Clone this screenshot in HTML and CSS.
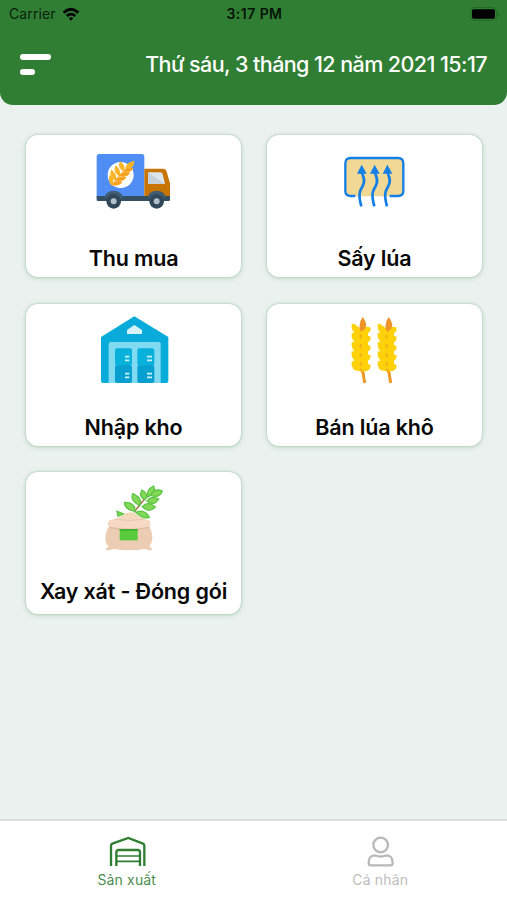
FILE: index.html
```html
<!DOCTYPE html>
<html lang="vi">
<head>
<meta charset="utf-8">
<title>Sản xuất</title>
<link rel="stylesheet" href="styles.css">
</head>
<body>
<div class="app">
  <header class="header">
    <div class="status">
      <div class="carrier"><span>Carrier</span>
        <svg class="wifi" viewBox="0 0 56 42"><path d="M2 13Q28-10 54 13L48 20Q28 2 8 20ZM12 24Q28 10 44 24L38 30Q28 22 18 30ZM21 34Q28 28 35 34L28 42Z"/></svg>
      </div>
      <span class="clock">3:17 PM</span>
      <svg class="battery" viewBox="0 0 90 42"><rect x="1.5" y="1.5" width="78" height="39" rx="12" fill="none" stroke="#256a28" stroke-width="3"/><rect x="6" y="7" width="69" height="28" rx="5"/><path d="M83 15q6 6 0 12z" fill="#1e571f"/></svg>
    </div>
    <div class="bar">
      <div class="menu"><i class="line long"></i><i class="line short"></i></div>
      <span class="date">Thứ sáu, 3 tháng 12 năm 2021 15:17</span>
    </div>
  </header>

  <main class="grid">
    <section class="card">
      <svg class="icon" viewBox="0 -18 300 255">
        <path d="M45 27H173Q181 27 181 35V160H38V35Q38 27 45 27Z" fill="#508df5"/>
        <path d="M181 71H237Q246 71 248 80L258 115V158H181Z" fill="#c77404"/>
        <path d="M192 82H229Q234 82 236 87L243 117H192Z" fill="#dce5ec"/><path d="M192 82L243 117H192Z" fill="#c6d1db"/>
        <path d="M38 153H258V164Q258 168 254 168H42Q38 168 38 164Z" fill="#344f62"/>
        <path d="M61 160a28 23 0 0 1 56 0zM190 160a28 23 0 0 1 56 0z" fill="#405c70"/>
        <g fill="#30485a"><circle cx="89" cy="169" r="22"/><circle cx="218" cy="169" r="22"/></g>
        <g fill="#b3c0c9"><circle cx="89" cy="169" r="9"/><circle cx="218" cy="169" r="9"/></g>
        <circle cx="110" cy="90" r="39" fill="#fff"/>
        <path d="M84 120Q108 85 147 54" fill="none" stroke="#f59a18" stroke-width="3"/>
        <g fill="#fbb529" stroke="#fbb529" stroke-width="4"><path d="M127 70Q126 55 149 50Q149 68 127 70Z"/><path d="M119 78Q102 66 109 52Q124 62 119 78Z"/><path d="M105 91Q88 79 96 64Q110 77 105 91Z"/><path d="M94 105Q75 94 83 77Q98 90 94 105Z"/><path d="M84 120Q74 107 78 94Q91 107 84 120Z"/></g>
        <g fill="#f79e1b" stroke="#f9a722" stroke-width="3"><path d="M119 78Q130 66 147 71Q138 84 119 78Z"/><path d="M105 91Q116 79 137 84Q126 99 105 91Z"/><path d="M94 105Q107 91 126 98Q114 112 94 105Z"/><path d="M84 119Q97 104 114 112Q103 124 84 119Z"/></g>
      </svg>
      <h2 class="label">Thu mua</h2>
    </section>
    <section class="card">
      <svg class="icon" viewBox="-15 -18 300 255">
        <rect x="46" y="39" width="174" height="115" rx="14" fill="#f1d894"/>
        <path d="M76 153H62Q46 153 46 138V55Q46 39 62 39H204Q220 39 220 55V138Q220 153 204 153H179" fill="none" stroke="#1480e6" stroke-width="7"/>
        <g fill="none" stroke="#1480e6" stroke-width="8"><path d="M95 80C99 95 108 106 98 123C89 138 84 147 94 184"/><path d="M134 80C138 95 147 106 137 123C128 138 123 147 133 184"/><path d="M172 80C176 95 185 106 175 123C166 138 161 147 171 184"/></g>
        <path d="M95 59L110 86H81ZM134 59L149 86H120ZM172 59L187 86H158Z" fill="#1480e6"/>
      </svg>
      <h2 class="label">Sấy lúa</h2>
    </section>
    <section class="card">
      <svg class="icon" viewBox="-18 0 300 255">
        <path d="M133 25L235 87V219Q235 225 229 225H39Q33 225 33 219V87Z" fill="#08abd9"/>
        <path d="M133 51L156 66V78H111V66Z" fill="#d8f3fc"/>
        <path d="M62 102H206Q212 102 212 108V225H56V108Q56 102 62 102Z" fill="#80daf2"/>
        <g fill="#08b0dc"><rect x="75" y="121" width="51" height="52" rx="6"/><rect x="142" y="121" width="51" height="52" rx="6"/></g>
        <g fill="#079fd0"><rect x="75" y="172" width="51" height="53" rx="6"/><rect x="142" y="172" width="51" height="53" rx="6"/></g>
        <path d="M105 146h13M105 157h13M171 146h15M171 157h15M105 197h13M105 208h13M171 197h15M171 208h15" stroke="#caf2f9" stroke-width="5"/>
      </svg>
      <h2 class="label">Nhập kho</h2>
    </section>
    <section class="card">
      <svg class="icon" viewBox="-28 0 300 255">
        <defs>
          <g id="grain"><path d="M80 77Q48 80 52 47Q62 46 67 53Q80 59 80 77Z"/><path d="M78 77Q110 82 109 59Q97 53 87 60Q78 66 78 77Z"/></g>
          <g id="ear">
            <path d="M80 60L85 187L91 225" fill="none" stroke="#ec9829" stroke-width="9"/>
            <g fill="#ffd109"><use href="#grain"/><use href="#grain" y="27"/><use href="#grain" y="55"/><use href="#grain" y="83"/><use href="#grain" y="112"/><rect x="59" y="60" width="42" height="126" rx="14"/></g>
            <path d="M85 27Q102 48 92 63L81 72Q74 65 76 50Q77 38 85 27Z" fill="#ed942b"/>
            <path d="M79 82v8M79 110v8M79 138v7M79 165v7M80 184l3 9" stroke="#f5ad1a" stroke-width="6" stroke-linecap="round"/>
          </g>
        </defs>
        <use href="#ear"/><use href="#ear" x="78"/>
      </svg>
      <h2 class="label">Bán lúa khô</h2>
    </section>
    <section class="card raised">
      <svg class="icon" viewBox="-18 -3 300 255">
        <path d="M133 106Q156 70 189 42" fill="none" stroke="#a66d3e" stroke-width="4"/>
        <g fill="#83d957" stroke="#5cc546" stroke-width="4">
          <path d="M174 60Q167 38 191 27Q200 48 174 60Z"/><path d="M182 55Q193 32 217 42Q208 65 182 55Z"/><path d="M165 69Q144 57 156 39Q179 52 165 69Z"/><path d="M171 73Q184 54 206 66Q192 89 171 73Z"/><path d="M149 86Q119 70 128 50Q158 62 149 86Z"/><path d="M157 89Q173 70 196 90Q176 110 157 89Z"/><path d="M135 103Q104 98 103 76Q136 76 135 103Z"/><path d="M138 106Q164 94 178 121Q157 128 138 106Z"/><path d="M84 117L81 103L101 111Z"/>
        </g>
        <path d="M59 148Q46 161 46 183Q46 201 57 209L49 213Q44 221 56 220L72 216Q119 224 164 216L178 220Q190 221 184 212L177 208Q187 199 187 181Q187 163 177 149Z" fill="#ecccb2"/>
        <path d="M75 127Q86 120 95 117Q106 107 120 106Q135 106 143 116L163 127Z" fill="#f3dbb9"/>
        <path d="M58 130Q87 121 118 121Q151 121 178 130Q185 142 178 152Q116 163 57 151Q49 141 58 130Z" fill="#f6d9c4"/>
        <path d="M58 151Q118 163 178 151" fill="none" stroke="#deb99e" stroke-width="4"/>
        <path d="M74 127Q117 134 162 127" fill="none" stroke="#e8c8ae" stroke-width="3"/>
        <path d="M99 116h2M112 113h2M125 112h2M137 118h2M117 121h2" stroke="#d9b98f" stroke-width="3"/>
        <path d="M89 156H143V190H89Z" fill="#59cc3e"/><path d="M89 156H143V161H89Z" fill="#3eb12e"/>
      </svg>
      <h2 class="label">Xay xát - Đóng gói</h2>
    </section>
  </main>

  <nav class="tabs">
    <div class="tab active">
      <svg class="tab-icon" viewBox="83 60 120 99"><g fill="none" stroke="#2e7d32" stroke-width="7"><path d="M95 153V92Q95 88 99 86L147 69L191 86Q195 88 195 92V153" /><path d="M111 153V112Q111 105 118 105H175Q182 105 182 112V153"/><path d="M111 123H182M111 139H182" stroke-width="5"/></g></svg>
      <span>Sản xuất</span>
    </div>
    <div class="tab">
      <svg class="tab-icon" viewBox="91 60 120 99"><g fill="none" stroke="#b9b9b9" stroke-width="7"><circle cx="153" cy="90" r="22"/><path d="M124 151Q117 151 117 145Q117 127 127 123Q135 120 143 123Q153 126 163 123Q171 120 179 123Q189 127 189 145Q189 151 182 151Z"/></g></svg>
      <span>Cá nhân</span>
    </div>
  </nav>
</div>
</body>
</html>
```
FILE: styles.css
```css
* { box-sizing: border-box; }
body { margin: 0; font-family: Inter, "Liberation Sans", sans-serif; }
.app { width: 507px; height: 900px; display: flex; flex-direction: column; background: #eaf1ef; overflow: hidden; }
.header { height: 105px; flex: none; background: #2f7e33; border-radius: 0 0 13px 13px; }
.status { height: 27px; display: grid; grid-template-columns: 1fr auto 1fr; align-items: center; padding: 0 7px 0 9px; color: #0b1f0c; font-size: 14px; }
.carrier { display: flex; align-items: center; gap: 6px; letter-spacing: 0.1px; }
.wifi { width: 18px; height: 14px; fill: #000; }
.clock { color: #061307; font-size: 14px; font-weight: 600; letter-spacing: 0.45px; }
.battery { width: 30px; height: 14px; justify-self: end; }
.bar { height: 74px; display: flex; align-items: center; justify-content: space-between; padding: 0 20px; }
.menu { display: flex; flex-direction: column; gap: 9px; }
.line { display: block; height: 6px; border-radius: 3px; background: #fff; }
.long { width: 31px; }
.short { width: 15px; }
.date { color: #fff; font-size: 21.5px; font-weight: 450; letter-spacing: -0.58px; white-space: nowrap; }
.grid { flex: 1; display: grid; grid-template-columns: 215px 215px; grid-auto-rows: 142px; gap: 26.5px 26px; padding: 30px 25px 0 26px; align-content: start; }
.card { display: flex; flex-direction: column; align-items: center; padding-top: 4px; background: #fff; border-radius: 12px; box-shadow: 0 0 2px #9bc0a4, 0 1px 5px rgba(47, 126, 51, 0.24); }
.icon { width: 100px; height: 85px; flex: none; }
.label { margin: 19px 0 0; color: #080808; font-size: 21.5px; line-height: 30px; font-weight: 600; letter-spacing: -0.16px; white-space: nowrap; }
.raised .label { margin-top: 15px; }
.tabs { height: 81px; flex: none; display: grid; grid-template-columns: 1fr 1fr; background: #fff; border-top: 2px solid #d9dddc; }
.tab { display: flex; flex-direction: column; align-items: center; padding-top: 14px; color: #bdbdbd; font-size: 14px; line-height: 20px; letter-spacing: 0.15px; }
.active { color: #4b8d50; }
.tab-icon { width: 40px; height: 33px; margin-bottom: 2px; }
```
